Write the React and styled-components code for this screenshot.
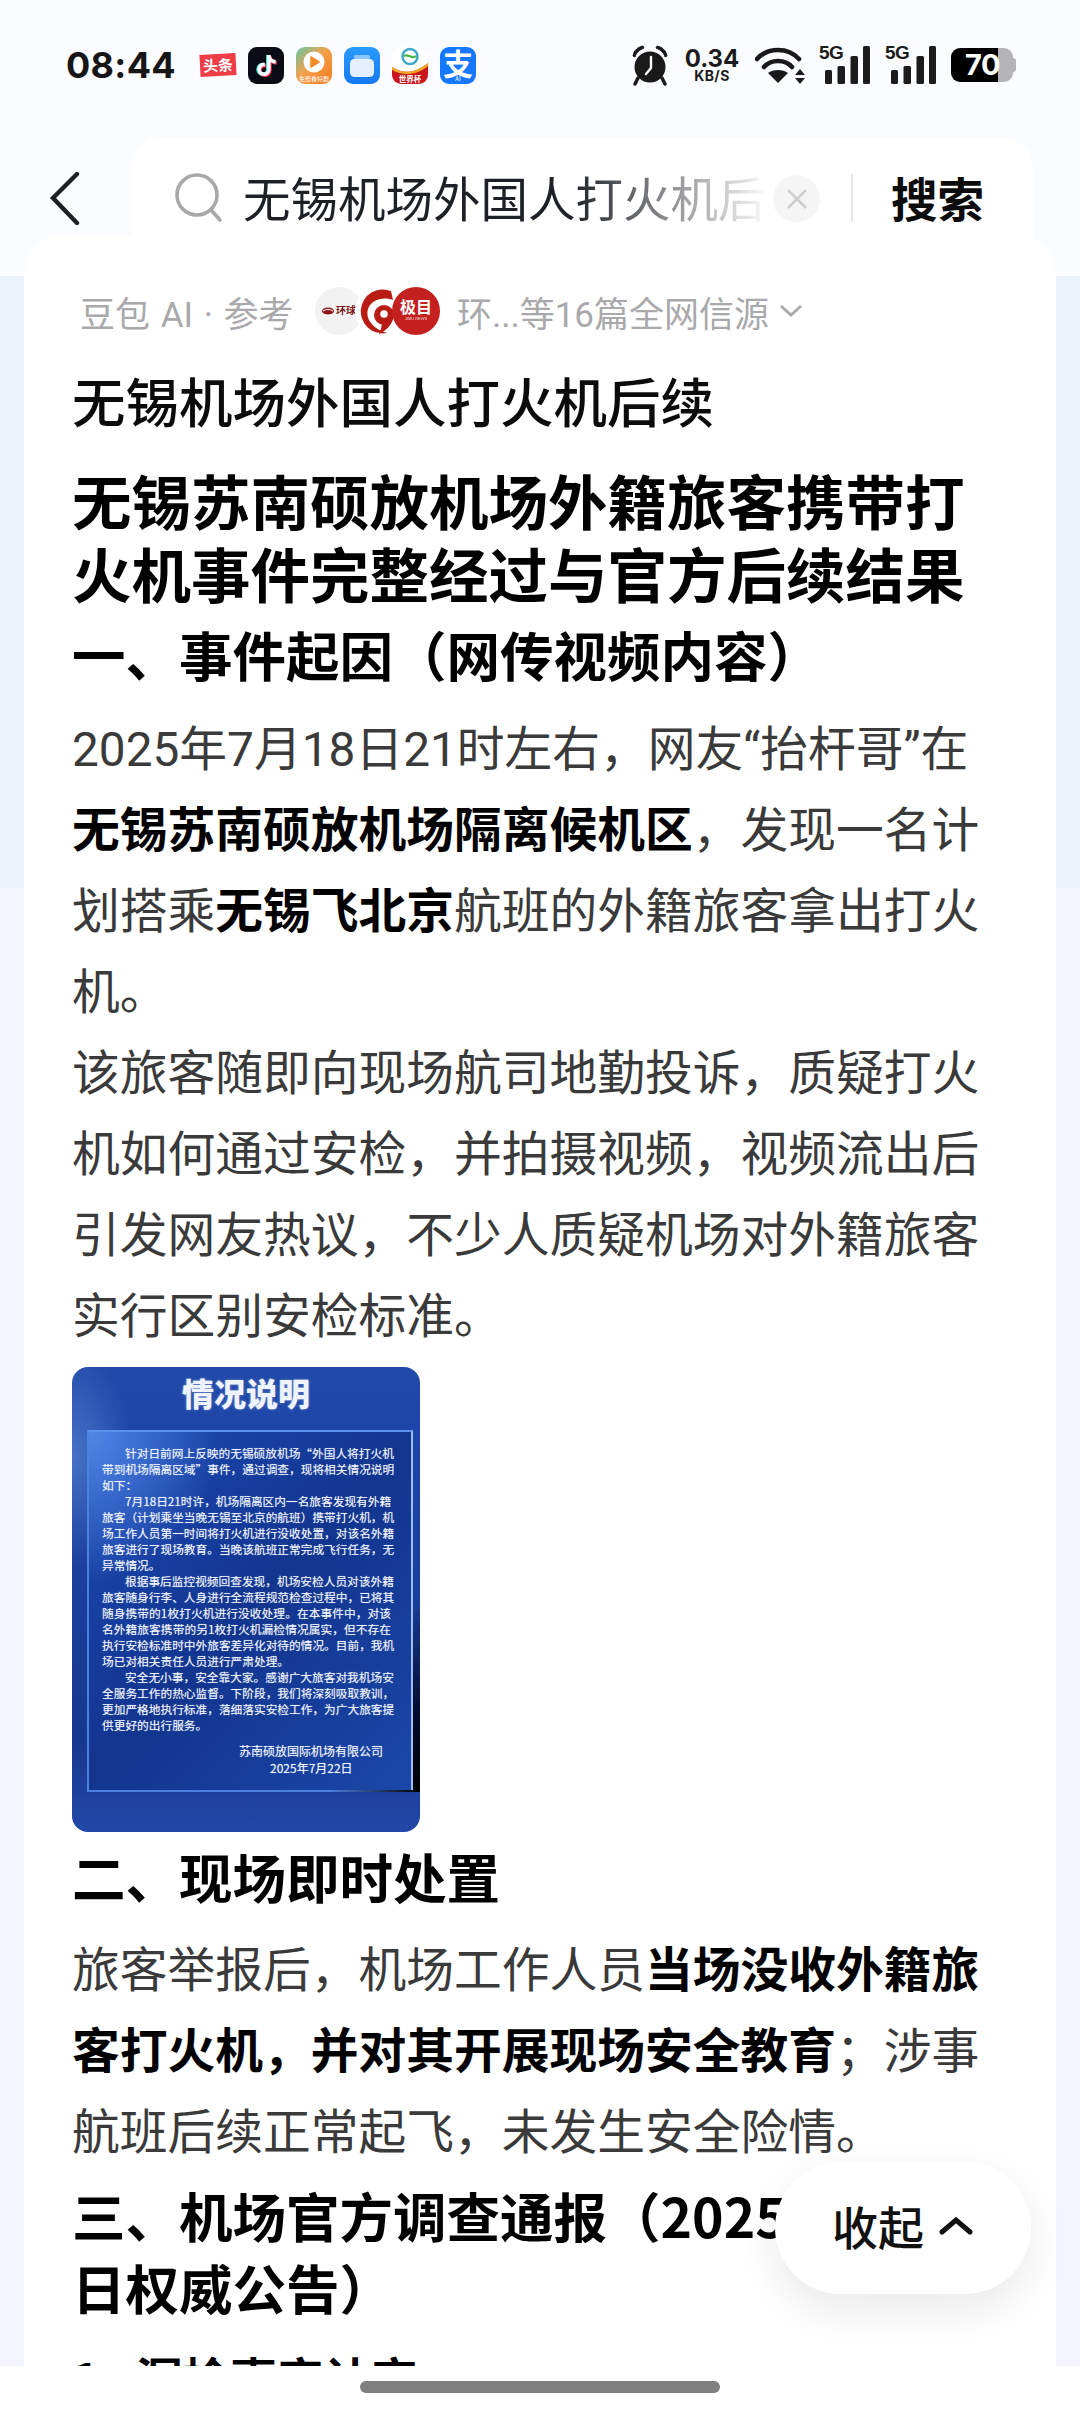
import React from "react";
import styled, { createGlobalStyle } from "styled-components";
import { FaTiktok } from "react-icons/fa6";

const CJK = `"Noto Sans CJK SC", "Noto Sans", sans-serif`;
const LATIN_FIRST = `Roboto, "Noto Sans CJK SC", sans-serif`;

const Global = createGlobalStyle`
  html, body { margin: 0; padding: 0; background: #fbfcff; }
  * { box-sizing: border-box; }
`;

const Page = styled.div`
  position: relative;
  width: 1080px;
  height: 2414px;
  overflow: hidden;
  font-family: ${CJK};
  background: linear-gradient(#fbfcff 0 276px, #edf3fd 276px 888px, #f3f6fe 888px);
`;

const StatusBar = styled.div`
  height: 138px;
  padding: 0 63px 8px 66px;
  display: flex;
  align-items: center;
  justify-content: space-between;
`;
const Group = styled.div`
  display: flex;
  align-items: center;
  gap: ${p => p.$gap || 12}px;
`;
const Time = styled.div`
  font-family: Inter, sans-serif;
  font-weight: 700;
  font-size: 36px;
  width: 110px;
  margin-right: 12px;
  letter-spacing: 0.3px;
  color: #161616;
`;
const AppIcon = styled.div`
  position: relative;
  width: 36px;
  height: 37px;
  border-radius: 9px;
  overflow: hidden;
  display: flex;
  align-items: center;
  justify-content: center;
  background: ${p => p.$bg};
  color: #fff;
`;
const Toutiao = styled.div`
  width: 36px;
  height: 22px;
  background: #ef3c45;
  color: #fff;
  font-size: 15px;
  font-weight: 700;
  line-height: 22px;
  text-align: center;
  white-space: nowrap;
  transform: rotate(-3deg);
`;
const TikLayer = styled.span`
  position: absolute;
  display: flex;
  left: ${p => 8 + p.$dx}px;
  top: ${p => 8 + p.$dy}px;
  color: ${p => p.$c};
`;
const TinyCaption = styled.span`
  position: absolute;
  left: 0;
  right: 0;
  bottom: 1px;
  font-size: ${p => p.$size || 6}px;
  line-height: 8px;
  font-weight: ${p => p.$w || 400};
  text-align: center;
  white-space: nowrap;
  color: #fff;
`;
const AlipayGlyph = styled.span`
  font-size: 30px;
  font-weight: 700;
  line-height: 30px;
  margin-top: -6px;
`;
const Speed = styled.div`
  width: 58px;
  display: flex;
  flex-direction: column;
  align-items: center;
  font-family: Inter, sans-serif;
  font-weight: 700;
  color: #1c1c1c;
  font-size: 24px;
  line-height: 21px;
  white-space: nowrap;
`;
const SpeedUnit = styled.span`
  font-size: 14px;
  line-height: 13px;
  letter-spacing: 0.4px;
`;
const Signal = styled.div`
  position: relative;
  width: 52px;
  height: 38px;
`;
const FiveG = styled.span`
  position: absolute;
  left: 0;
  top: -3px;
  font-family: "Liberation Sans", sans-serif;
  font-weight: 700;
  font-size: 19px;
  line-height: 20px;
  letter-spacing: -0.5px;
  color: #1c1c1c;
`;
const Battery = styled.div`
  position: relative;
  width: 62px;
  margin-right: 4px;
  height: 34px;
  border-radius: 9px;
  background: linear-gradient(90deg, #000 0 47px, #b4b4b6 47px);
  color: #fff;
  font-family: Inter, sans-serif;
  font-weight: 700;
  font-size: 29px;
  line-height: 34px;
  padding-left: 14px;
  letter-spacing: -0.5px;
  &::after {
    content: "";
    position: absolute;
    left: 62px;
    top: 10px;
    width: 3px;
    height: 14px;
    border-radius: 0 3px 3px 0;
    background: #b4b4b6;
  }
`;

const SearchRow = styled.div`
  display: flex;
  align-items: flex-start;
  padding: 0 47px 0 48px;
`;
const BackBtn = styled.div`
  width: 84px;
  padding-top: 33px;
  display: flex;
`;
const SearchBox = styled.div`
  flex: 1;
  height: 112px;
  background: #fff;
  border-radius: 30px 30px 0 0;
  padding: 31px 0 0 43px;
  display: flex;
  align-items: flex-start;
`;
const SearchText = styled.div`
  width: 528px;
  margin-left: 20px;
  font-size: 47.5px;
  line-height: 56px;
  white-space: nowrap;
  overflow: hidden;
  color: #1d2126;
  -webkit-mask-image: linear-gradient(90deg, #000 62%, transparent 100%);
  mask-image: linear-gradient(90deg, #000 62%, transparent 100%);
`;
const ClearBtn = styled.div`
  width: 47px;
  height: 47px;
  margin: 6px 0 0 2px;
  border-radius: 50%;
  background: #f5f5f5;
  display: flex;
  align-items: center;
  justify-content: center;
`;
const Divider = styled.div`
  width: 2px;
  height: 48px;
  margin: 5px 38px 0 31px;
  background: #e8e8e8;
`;
const SearchAction = styled.div`
  font-size: 46.5px;
  line-height: 56px;
  font-weight: 700;
  color: #0c0c0c;
`;

const Card = styled.div`
  margin: -15px 24px 0;
  padding: 50px 48px 0;
  background: #fff;
  border-radius: 40px 40px 0 0;
  height: 2200px;
`;
const SourceRow = styled.div`
  height: 52px;
  padding-left: 8px;
  display: flex;
  align-items: center;
  font-family: ${LATIN_FIRST};
  font-size: 35px;
  color: #a9a9ab;
  white-space: nowrap;
`;
const SourceLabel = styled.span`
  width: 235px;
  word-spacing: 2px;
`;
const Avatars = styled.div`
  display: flex;
  width: 125px;
`;
const Avatar = styled.div`
  position: relative;
  width: 48px;
  height: 48px;
  flex: none;
  margin-left: ${p => p.$overlap || 0}px;
  border-radius: 50%;
  background: ${p => p.$bg};
  color: ${p => p.$fg};
  display: flex;
  flex-direction: ${p => (p.$row ? "row" : "column")};
  gap: ${p => (p.$row ? 2 : 0)}px;
  align-items: center;
  justify-content: center;
  overflow: hidden;
`;
const AvatarBig = styled.span`
  font-size: ${p => p.$size}px;
  line-height: 1.05;
  font-weight: 600;
  white-space: nowrap;
`;
const AvatarSmall = styled.span`
  font-size: 4px;
  line-height: 6px;
  font-family: "Liberation Sans", sans-serif;
  opacity: .8;
`;
const SourceMore = styled.span`
  margin-left: 17px;
`;
const Chevron = styled.span`
  margin-left: 10px;
  display: flex;
`;

const Query = styled.h1`
  margin: 23px 0 23px;
  font-size: 53.5px;
  line-height: 80px;
  font-weight: 500;
  color: #0b0b0b;
`;
const MainTitle = styled.h2`
  margin: 0 0 9px;
  font-size: 59.5px;
  line-height: 73px;
  font-weight: 700;
  color: #000;
`;
const Section = styled.h3`
  margin: ${p => p.$top || 0}px 0 ${p => p.$bottom || 0}px;
  font-size: 53.5px;
  line-height: 72px;
  font-weight: 700;
  color: #000;
`;
const Para = styled.p`
  margin: 0;
  width: 912px;
  font-size: 47.75px;
  line-height: 81px;
  color: #3a3a3a;
`;
const Strong = styled.strong`
  font-weight: 700;
  color: #000;
`;
const Latin = styled.span`
  font-family: Roboto, sans-serif;
  line-height: 0;
`;
const ListHead = styled.div`
  margin-top: 14px;
  display: flex;
  gap: 21px;
  font-size: 47px;
  line-height: 80px;
  font-weight: 700;
  color: #000;
`;

const Notice = styled.div`
  width: 348px;
  height: 465px;
  margin: 14px 0 8px;
  border-radius: 16px;
  overflow: hidden;
  background:
    radial-gradient(ellipse 60px 110px at 0% 90px, rgba(120, 170, 240, 0.45), transparent 100%),
    linear-gradient(180deg, #2149a9 0%, #1e46a8 14%, #16378f 80%, #2148a8 100%);
`;
const NoticeTitle = styled.div`
  height: 63px;
  text-align: center;
  color: #eef3ff;
  font-size: 32px;
  line-height: 50px;
  font-weight: 900;
  text-shadow: 0 0 3px rgba(255, 255, 255, 0.35);
`;
const NoticePanel = styled.div`
  position: relative;
  width: 326px;
  height: 362px;
  margin-left: 15px;
  padding: 13px 20px 0 13px;
  border: 2px solid;
  border-color: #5c92ee #9dbcf0 #4d80de #4b82e0;
  background:
    radial-gradient(ellipse 130px 150px at 0% 0%, rgba(90, 145, 240, 0.85), transparent 100%),
    linear-gradient(135deg, #1c4ab5 0%, #12358f 50%, #1a47a8 100%);
  color: #f2f6ff;
  font-size: 11.7px;
  line-height: 16px;
  text-shadow: 0 0 1px rgba(255, 255, 255, 0.45);
  &::after {
    content: "";
    position: absolute;
    right: -9px;
    bottom: -2px;
    width: 7px;
    height: 190px;
    background: linear-gradient(180deg, transparent, #020a2c 60%, #000);
  }
  &::before {
    content: "";
    position: absolute;
    right: -9px;
    bottom: -2px;
    width: 90px;
    height: 2px;
    background: linear-gradient(90deg, transparent, #000);
  }
`;
const NoticeLine = styled.div`
  white-space: nowrap;
  padding-left: ${p => (p.$indent ? 23 : 0)}px;
  text-align: justify;
  text-align-last: ${p => (p.$short ? "left" : "justify")};
`;
const NoticeSign = styled.div`
  margin-top: ${p => p.$top || 0}px;
  padding-left: ${p => p.$left}px;
  font-size: 12px;
  line-height: 17px;
  white-space: nowrap;
`;

const CollapseBtn = styled.div`
  position: absolute;
  left: 775px;
  top: 2162px;
  width: 256px;
  height: 132px;
  border-radius: 66px;
  background: #fff;
  box-shadow: 0 16px 46px rgba(0, 0, 0, 0.09);
  display: flex;
  align-items: center;
  padding: 0 0 6px 57px;
  gap: 14px;
  font-size: 46px;
  font-weight: 500;
  color: #111;
`;
const HomeBar = styled.div`
  position: absolute;
  left: 0;
  right: 0;
  bottom: 0;
  height: 48px;
  background: #fff;
  display: flex;
  justify-content: center;
  padding-top: 15px;
`;
const HomeHandle = styled.div`
  width: 360px;
  height: 12px;
  border-radius: 6px;
  background: #808080;
`;

const noticeLines = [
  ["针对日前网上反映的无锡硕放机场“外国人将打火机", 1, 0],
  ["带到机场隔离区域”事件，通过调查，现将相关情况说明", 0, 0],
  ["如下：", 0, 1],
  ["7月18日21时许，机场隔离区内一名旅客发现有外籍", 1, 0],
  ["旅客（计划乘坐当晚无锡至北京的航班）携带打火机，机", 0, 0],
  ["场工作人员第一时间将打火机进行没收处置，对该名外籍", 0, 0],
  ["旅客进行了现场教育。当晚该航班正常完成飞行任务，无", 0, 0],
  ["异常情况。", 0, 1],
  ["根据事后监控视频回查发现，机场安检人员对该外籍", 1, 0],
  ["旅客随身行李、人身进行全流程规范检查过程中，已将其", 0, 0],
  ["随身携带的1枚打火机进行没收处理。在本事件中，对该", 0, 0],
  ["名外籍旅客携带的另1枚打火机漏检情况属实，但不存在", 0, 0],
  ["执行安检标准时中外旅客差异化对待的情况。目前，我机", 0, 0],
  ["场已对相关责任人员进行严肃处理。", 0, 1],
  ["安全无小事，安全靠大家。感谢广大旅客对我机场安", 1, 0],
  ["全服务工作的热心监督。下阶段，我们将深刻吸取教训，", 0, 0],
  ["更加严格地执行标准，落细落实安检工作，为广大旅客提", 0, 0],
  ["供更好的出行服务。", 0, 1],
];

const Alarm = () => (
  <svg width="38" height="42" viewBox="0 0 38 42">
    <circle cx="19" cy="23" r="15.5" fill="#1a1a1a" />
    <path d="M2 12 C3 6 7 3 12 2 L13 4 C8 6 5 9 4 13Z M36 12 C35 6 31 3 26 2 L25 4 C30 6 33 9 34 13Z" fill="#1a1a1a" stroke="#1a1a1a" />
    <path d="M7 34 L4 40 M31 34 L34 40" stroke="#1a1a1a" strokeWidth="3.5" strokeLinecap="round" />
    <path d="M20 13 V24 L15 30" fill="none" stroke="#fff" strokeWidth="2.4" strokeLinecap="round" strokeLinejoin="round" />
  </svg>
);
const Wifi = () => (
  <svg width="50" height="38" viewBox="0 0 50 38">
    <path d="M2 13 C13 1 33 1 44 13" fill="none" stroke="#1a1a1a" strokeWidth="4.6" strokeLinecap="round" />
    <path d="M9 21 C16 13 30 13 37 21" fill="none" stroke="#1a1a1a" strokeWidth="4.6" strokeLinecap="round" />
    <path d="M23 37 L13 27 C18 23 28 23 33 27Z" fill="#1a1a1a" />
    <path d="M45 23 L50 29 H40Z M40 32 H50 L45 38Z" fill="#1a1a1a" />
  </svg>
);
const Bars = () => (
  <svg width="52" height="38" viewBox="0 0 52 38" style={{ position: "absolute", left: 0, top: 0 }}>
    <rect x="6" y="24" width="7" height="14" rx="1.5" fill="#1c1c1c" />
    <rect x="18.5" y="20" width="7.5" height="18" rx="1.5" fill="#1c1c1c" />
    <rect x="31.5" y="10" width="7.5" height="28" rx="1.5" fill="#1c1c1c" />
    <rect x="44" y="0" width="7" height="38" rx="1.5" fill="#1c1c1c" />
  </svg>
);
const Status5G = () => (
  <Signal>
    <Bars />
    <FiveG>5G</FiveG>
  </Signal>
);

const Mobile = () => (
  <AppIcon $bg="#fff">
    <svg width="36" height="37" viewBox="0 0 36 37">
      <path d="M0 20 C10 27 22 27 36 16 V30 C36 34 33 37 29 37 H7 C3 37 0 34 0 30Z" fill="#c8161d" />
      <path d="M0 20 C10 27 22 27 36 16 V19 C24 29 10 29 0 23Z" fill="#f5a623" />
      <ellipse cx="18" cy="9.5" rx="7.5" ry="7.5" fill="none" stroke="#3aa6c9" strokeWidth="2.4" />
      <path d="M12 9 C16 6 20 13 24 9" fill="none" stroke="#4bb24b" strokeWidth="2.2" />
    </svg>
    <TinyCaption $size={7.5} $w={700}>世界杯</TinyCaption>
  </AppIcon>
);

export default function App() {
  return (
    <Page>
      <Global />
      <StatusBar>
        <Group>
          <Time>08:44</Time>
          <Toutiao>头条</Toutiao>
          <AppIcon $bg="#0b0b14">
            <TikLayer $dx={-1} $dy={0} $c="#25f4ee"><FaTiktok size={21} /></TikLayer>
            <TikLayer $dx={1} $dy={1} $c="#fe2c55"><FaTiktok size={21} /></TikLayer>
            <TikLayer $dx={0} $dy={0.5} $c="#fff"><FaTiktok size={21} /></TikLayer>
          </AppIcon>
          <AppIcon $bg="linear-gradient(135deg,#63c8a6 0%,#f3a04a 45%,#f4791f 100%)">
            <svg width="36" height="37" viewBox="0 0 36 37" style={{ position: "absolute", left: 0, top: 0 }}>
              <circle cx="18" cy="15" r="10.5" fill="#fff" />
              <path d="M15 10 L23 15 L15 20Z" fill="#f58a24" strokeLinejoin="round" stroke="#f58a24" strokeWidth="1.5" />
            </svg>
            <TinyCaption $size={6}>免费看好剧</TinyCaption>
          </AppIcon>
          <AppIcon $bg="linear-gradient(180deg,#2b9bff,#1579f2)">
            <svg width="36" height="37" viewBox="0 0 36 37">
              <rect x="10" y="8" width="16" height="4" rx="1.5" fill="#8cc6ff" />
              <rect x="6" y="12" width="24" height="18" rx="4.5" fill="#e6effd" />
            </svg>
          </AppIcon>
          <Mobile />
          <AppIcon $bg="#1677ff">
            <AlipayGlyph>支</AlipayGlyph>
            <TinyCaption $size={6}>AI</TinyCaption>
          </AppIcon>
        </Group>
        <Group $gap={14}>
          <Alarm />
          <Speed>
            0.34
            <SpeedUnit>KB/S</SpeedUnit>
          </Speed>
          <Wifi />
          <Status5G />
          <Status5G />
          <Battery>70</Battery>
        </Group>
      </StatusBar>

      <SearchRow>
        <BackBtn>
          <svg width="32" height="56" viewBox="0 0 32 56">
            <path d="M29 3 L5 27 L29 52" fill="none" stroke="#1d2126" strokeWidth="4.4" strokeLinecap="round" strokeLinejoin="miter" />
          </svg>
        </BackBtn>
        <SearchBox>
          <svg width="48" height="50" viewBox="0 0 48 50" style={{ flex: "none", marginTop: 4 }}>
            <circle cx="22" cy="22" r="20" fill="none" stroke="#a8a8a8" strokeWidth="3.6" />
            <path d="M36 37 L45 47" stroke="#a8a8a8" strokeWidth="3.6" strokeLinecap="round" />
          </svg>
          <SearchText>无锡机场外国人打火机后续</SearchText>
          <ClearBtn>
            <svg width="22" height="22" viewBox="0 0 22 22">
              <path d="M2 2 L20 20 M20 2 L2 20" stroke="#cfcfcf" strokeWidth="2.6" />
            </svg>
          </ClearBtn>
          <Divider />
          <SearchAction>搜索</SearchAction>
        </SearchBox>
      </SearchRow>

      <Card>
        <SourceRow>
          <SourceLabel>豆包 AI · 参考</SourceLabel>
          <Avatars>
            <Avatar $bg="#f2f2f2" $fg="#7c1414" $row>
              <svg width="12" height="8" viewBox="0 0 12 8">
                <ellipse cx="6" cy="4" rx="6" ry="3.6" fill="#8f1a1d" />
                <path d="M1 4 C4 2 8 2 11 4" fill="none" stroke="#fff" strokeWidth="1" />
              </svg>
              <AvatarBig $size={10}>环球</AvatarBig>
            </Avatar>
            <Avatar $bg="#fff" $overlap={-8}>
              <svg width="48" height="48" viewBox="0 0 48 48">
                <path d="M36 4 A22 22 0 1 0 32 46 C18 42 10 32 13 22 C16 13 28 9 38 13Z" fill="#b81c14" />
                <circle cx="29" cy="28" r="10" fill="#b81c14" />
                <circle cx="29" cy="27" r="3.8" fill="#fff" />
                <path d="M38 30 C38 38 30 44 24 47 C27 40 27 37 27 33Z" fill="#b81c14" />
              </svg>
            </Avatar>
            <Avatar $bg="#c3201f" $fg="#fff" $overlap={-11}>
              <AvatarBig $size={16}>极目</AvatarBig>
              <AvatarSmall>JIMU NEWS</AvatarSmall>
            </Avatar>
          </Avatars>
          <SourceMore>环...等16篇全网信源</SourceMore>
          <Chevron>
            <svg width="24" height="14" viewBox="0 0 24 14">
              <path d="M2 2 L12 11 L22 2" fill="none" stroke="#a9a9ab" strokeWidth="2.8" />
            </svg>
          </Chevron>
        </SourceRow>

        <Query>无锡机场外国人打火机后续</Query>
        <MainTitle>无锡苏南硕放机场外籍旅客携带打火机事件完整经过与官方后续结果</MainTitle>
        <Section $bottom={15}>一、事件起因（网传视频内容）</Section>
        <Para>
          <Latin>2025</Latin>年<Latin>7</Latin>月<Latin>18</Latin>日<Latin>21</Latin>时左右，网友<Latin>“</Latin>抬杆哥<Latin>”</Latin>在<Strong>无锡苏南硕放机场隔离候机区</Strong>，发现一名计划搭乘<Strong>无锡飞北京</Strong>航班的外籍旅客拿出打火机。
        </Para>
        <Para>
          该旅客随即向现场航司地勤投诉，质疑打火机如何通过安检，并拍摄视频，视频流出后引发网友热议，不少人质疑机场对外籍旅客实行区别安检标准。
        </Para>

        <Notice>
          <NoticeTitle>情况说明</NoticeTitle>
          <NoticePanel>
            {noticeLines.map(([text, indent, short]) => (
              <NoticeLine key={text} $indent={indent} $short={short}>{text}</NoticeLine>
            ))}
            <NoticeSign $top={9} $left={137}>苏南硕放国际机场有限公司</NoticeSign>
            <NoticeSign $left={168}>2025年7月22日</NoticeSign>
          </NoticePanel>
        </Notice>

        <Section $bottom={14}>二、现场即时处置</Section>
        <Para>
          旅客举报后，机场工作人员<Strong>当场没收外籍旅客打火机，并对其开展现场安全教育</Strong>；涉事航班后续正常起飞，未发生安全险情。
        </Para>
        <Section $top={10}>三、机场官方调查通报（2025年7月22日权威公告）</Section>
        <ListHead>
          <span>1.</span>
          <span>漏检事实认定</span>
        </ListHead>
      </Card>

      <CollapseBtn>
        收起
        <svg width="36" height="20" viewBox="0 0 36 20">
          <path d="M4 17 L18 5 L32 17" fill="none" stroke="#111" strokeWidth="5" strokeLinecap="round" />
        </svg>
      </CollapseBtn>
      <HomeBar><HomeHandle /></HomeBar>
    </Page>
  );
}
